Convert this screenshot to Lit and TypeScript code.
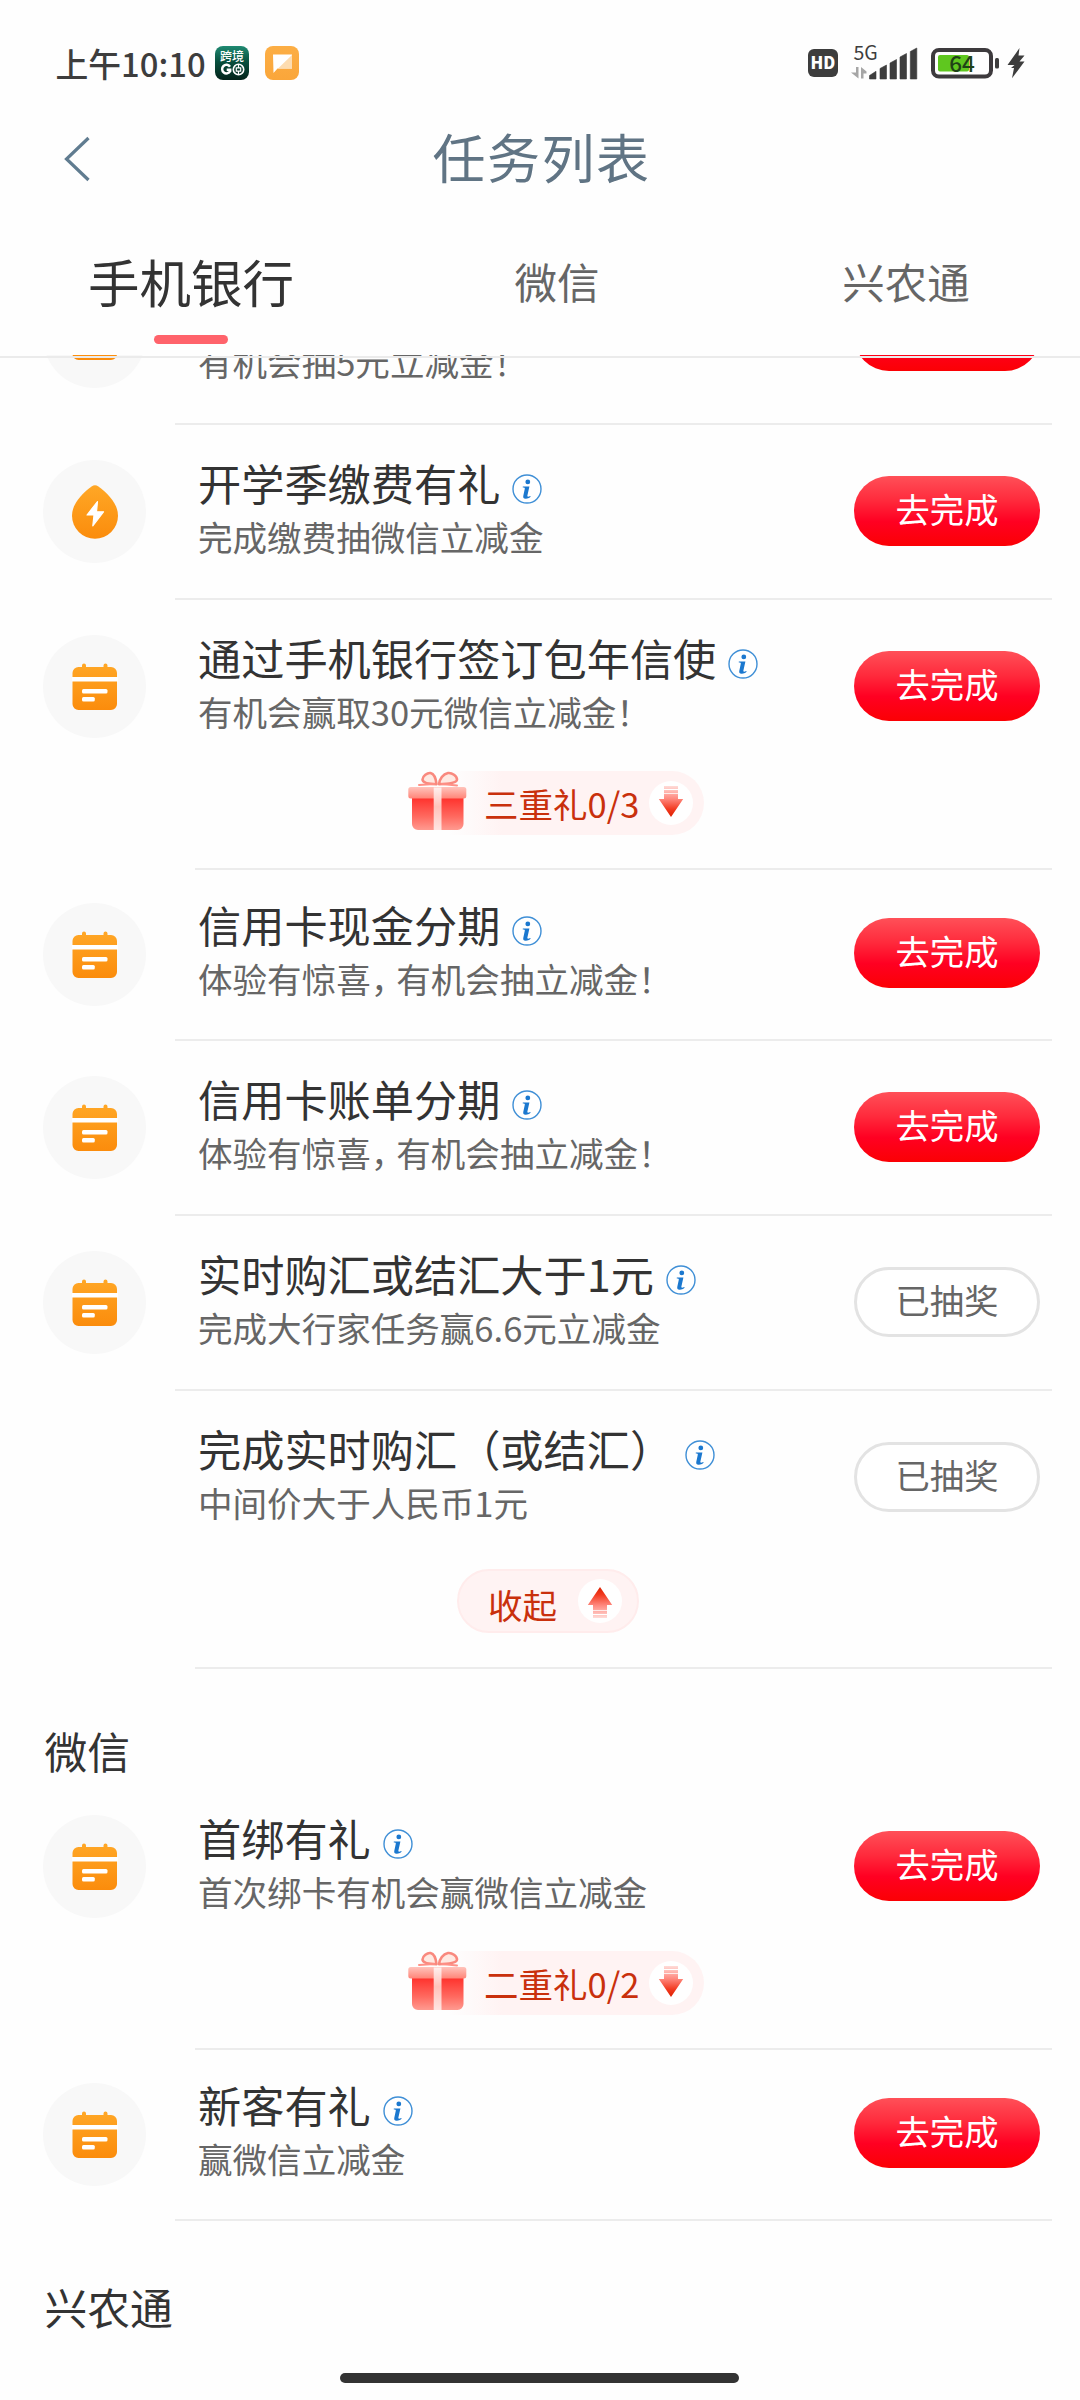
import { LitElement, html, css, svg, nothing } from "lit";
import { customElement, property } from "lit/decorators.js";

type TaskIcon = "calendar" | "drop" | "none";

interface Task {
  icon: TaskIcon;
  title: string;
  sub: string;
  done?: boolean;
  compact?: boolean;
  gift?: string;
  collapse?: boolean;
}

const BANK_TASKS: Task[] = [
  { icon: "calendar", title: "", sub: "有机会抽5元立减金！" },
  { icon: "drop", title: "开学季缴费有礼", sub: "完成缴费抽微信立减金" },
  { icon: "calendar", title: "通过手机银行签订包年信使", sub: "有机会赢取30元微信立减金！", gift: "三重礼0/3" },
  { icon: "calendar", title: "信用卡现金分期", sub: "体验有惊喜，有机会抽立减金！", compact: true },
  { icon: "calendar", title: "信用卡账单分期", sub: "体验有惊喜，有机会抽立减金！" },
  { icon: "calendar", title: "实时购汇或结汇大于1元", sub: "完成大行家任务赢6.6元立减金", done: true },
  { icon: "none", title: "完成实时购汇（或结汇）", sub: "中间价大于人民币1元", done: true, collapse: true },
];

const WECHAT_TASKS: Task[] = [
  { icon: "calendar", title: "首绑有礼", sub: "首次绑卡有机会赢微信立减金", gift: "二重礼0/2" },
  { icon: "calendar", title: "新客有礼", sub: "赢微信立减金", compact: true },
];

const orange = svg`<defs><linearGradient id="o" x1="0" y1="0" x2="0" y2="1">
  <stop offset="0" stop-color="#ffa726"/><stop offset="1" stop-color="#fb8c0c"/></linearGradient></defs>`;

const calendarIcon = html`<svg width="46" height="47" viewBox="0 0 46 47">
  ${orange}
  <path fill="url(#o)" d="M6.500 4H10V2.500a2 2 0 0 1 4 0V4h17.500V2.500a2 2 0 0 1 4 0V4H39a6 6 0 0 1 6 6v31a6 6 0 0 1-6 6H6.500a6 6 0 0 1-6-6V10a6 6 0 0 1 6-6z"/>
  <rect x="0" y="14" width="46" height="4.500" fill="#fff"/>
  <rect x="10" y="26" width="25.500" height="4.500" rx="1.500" fill="#fff"/>
  <rect x="10" y="34" width="12.800" height="4.600" rx="1.500" fill="#fff"/>
</svg>`;

const dropIcon = html`<svg class="drop" width="46" height="54" viewBox="0 0 46 54">
  ${orange}
  <path fill="url(#o)" d="M19.600 1.400Q23-1 26.400 1.400C36 8.500 46 18.500 46 30.800a23 23 0 0 1-46 0C0 18.500 10 8.500 19.600 1.400z"/>
  <path fill="#fff" stroke="#fff" stroke-width="1.200" stroke-linejoin="round" d="M25.500 16.500L15 30h7l-1.200 10.800L31.500 26.800h-7z"/>
</svg>`;

const infoIcon = html`<svg class="info" width="30" height="30" viewBox="0 0 30 30">
  <circle cx="15" cy="15" r="14" fill="#fff" stroke="#3f8fd6" stroke-width="1.400"/>
  <circle cx="15.800" cy="7.900" r="2.400" fill="#1b78cf"/>
  <path d="M10.800 12.500h6.600l-2 9.100c-.3 1.300.6 1.500 2.900.4l.3.800c-1.800 1.500-3.400 2-5 1.900-2-.1-2.700-1.200-2.300-3l1.500-7c.1-.8-.2-1.100-2-1.200z" fill="#1b78cf"/>
</svg>`;

const giftIcon = html`<svg class="gift" width="60" height="60" viewBox="0 0 60 60">
  <defs>
    <linearGradient id="gb" x1="0" y1="0" x2="0" y2="1">
      <stop offset="0" stop-color="#ff2f2a"/><stop offset=".6" stop-color="#ff6a60"/><stop offset="1" stop-color="#ff9a90"/></linearGradient>
    <linearGradient id="gl" x1="0" y1="0" x2="0" y2="1">
      <stop offset="0" stop-color="#ffc4bc"/><stop offset="1" stop-color="#ff8578"/></linearGradient>
    <linearGradient id="gr" x1="0" y1="0" x2="0" y2="1">
      <stop offset="0" stop-color="#fff0ee"/><stop offset=".45" stop-color="#ffc3bb"/><stop offset="1" stop-color="#ffe6e2"/></linearGradient>
  </defs>
  <path d="M5 26h51.500v27a6 6 0 0 1-6 6H11a6 6 0 0 1-6-6z" fill="url(#gb)"/>
  <rect x="1.300" y="16" width="58" height="11.500" rx="2.500" fill="url(#gl)"/>
  <rect x="26.700" y="16.500" width="7.800" height="42.500" fill="url(#gr)"/>
  <g fill="#ffe9e2" stroke="#f9897e" stroke-width="2.600" stroke-linejoin="round">
    <path d="M29.500 13.200C22 13 15.500 12 15.500 8.500c0-3.500 5-7 8-6.500 4 1 5.500 6 6 11.200z"/>
    <path d="M32 13.200c7.500-.2 18-1.200 18-4.700 0-3.500-5-7-9-6.500-5 1-8.500 6-9 11.200z"/>
  </g>
  <path d="M12 14l15-1M50 14.500l-15-1.500" stroke="#ff9187" stroke-width="2" stroke-linecap="round" fill="none"/>
</svg>`;

const arrowIcon = (up: boolean) => html`<svg class=${up ? "arrow up" : "arrow"} width="44" height="44" viewBox="0 0 44 44">
  <defs><linearGradient id="a" gradientUnits="userSpaceOnUse" x1="0" y1="5" x2="0" y2="36">
    <stop offset="0" stop-color="#ffdcd8"/><stop offset=".4" stop-color="#ff8a80"/><stop offset=".75" stop-color="#f23a20"/><stop offset="1" stop-color="#dc2000"/></linearGradient></defs>
  <circle cx="22" cy="22" r="22" fill="#fff"/>
  <path fill="url(#a)" d="M15 5h14v3H15zM15 9h14v3H15zM15 12.800h14v5.200h5.200L22 36 9.800 18H15z"/>
</svg>`;

@customElement("status-bar")
class StatusBar extends LitElement {
  static styles = css`
    :host { display: block; height: 110px; }
    .bar { display: flex; align-items: center; height: 36px; padding: 45px 55px 0 55.500px; color: #3d3d3d; }
    .time { font-size: 32.800px; line-height: 48px; font-weight: 500; margin: -4px 0; white-space: nowrap; width: 159.500px; }
    .apps { display: flex; gap: 16px; }
    .right { display: flex; margin-left: auto; align-items: center; }
    svg { display: block; }
  `;
  render() {
    return html`<div class="bar">
      <div class="time">上午10:10</div>
      <div class="apps">
        <svg width="34" height="34" viewBox="0 0 34 34">
          <defs><linearGradient id="g" x1="0" y1="0" x2="0" y2="1">
            <stop offset="0" stop-color="#1f8a72"/><stop offset=".45" stop-color="#08513f"/><stop offset="1" stop-color="#04231a"/></linearGradient></defs>
          <rect width="34" height="34" rx="8" fill="url(#g)"/>
          <text x="17" y="14.500" text-anchor="middle" font-size="12" font-weight="500" fill="#fff">跨境</text>
          <path d="M15 20.700a4.300 4.300 0 1 0 .2 4.500V23.800h-3.500" fill="none" stroke="#fff" stroke-width="2.500"/>
          <circle cx="23.500" cy="23.500" r="5.200" fill="none" stroke="#fff" stroke-width="1.600"/>
          <path d="M21.300 21.800h4.400v3.400h-4.400zM23.500 19v2.800M23.500 25.200v3" fill="none" stroke="#fff" stroke-width="1.200"/>
        </svg>
        <svg width="34" height="34" viewBox="0 0 34 34">
          <defs><linearGradient id="y" x1="0" y1="0" x2="0" y2="1">
            <stop offset="0" stop-color="#fcae45"/><stop offset="1" stop-color="#faa63a"/></linearGradient></defs>
          <rect width="34" height="34" rx="8" fill="url(#y)"/>
          <path d="M8 8.500h19v14H12.500L8.500 27z" fill="#fff"/>
          <path d="M27 9v13.500H13z" fill="#fddcb0"/>
        </svg>
      </div>
      <div class="right">
        <svg width="218" height="36" viewBox="807 45 218 36" fill="#3d3d3d">
          <rect x="808" y="49" width="30" height="28" rx="6"/>
          <text x="823" y="69" text-anchor="middle" font-size="16.500" font-weight="900" fill="#fff">HD</text>
          <text x="853.500" y="59.500" font-size="19.500">5G</text>
          <g fill="#a6a6a6"><path d="M856 67h2.500v11.500L851 72.500h5z"/><path d="M863.500 78.500H861V67l5.500 4.500v2h-3z"/></g>
          <path d="M869.500 79v-3.500l6.500-4.200V79zM880 79V68.500l6.500-3.500v14zM890 79V63l6.500-3.500V79zM900 79V57l6.500-3.500V79zM910.300 79V51.500l6.500-3.500v31z" stroke="#3d3d3d" stroke-width=".6" stroke-linejoin="round"/>
          <rect x="933" y="50" width="58" height="26.500" rx="6" fill="none" stroke="#3d3a3d" stroke-width="4"/>
          <rect x="938" y="55" width="31" height="16.500" rx="2" fill="#5fc71f"/>
          <text x="962" y="71.500" text-anchor="middle" font-size="22.500" font-weight="500" fill="#1f4216">64</text>
          <rect x="995" y="58" width="4" height="10.500" rx="1.500"/>
          <path d="M1019.500 48l-12 17h7l-3.500 3h3l-2 10.300 12.500-16.800h-5l5-6h-6z"/>
        </svg>
      </div>
    </div>`;
  }
}

@customElement("nav-header")
class NavHeader extends LitElement {
  static styles = css`
    :host { display: block; }
    .title-bar { display: grid; grid-template-columns: 140px 1fr 140px; align-items: center; height: 98px; }
    .back { margin-left: 64px; display: block; }
    .title { text-align: center; font-size: 53px; letter-spacing: 1.500px; line-height: 80px; color: #607484; margin: -6px 0 0 3px; }
    .tabs { display: grid; grid-template-columns: 382px 350px 348px; height: 147px; }
    .tab { display: flex; flex-direction: column; align-items: center; font-size: 42.500px; color: #666; }
    .label { height: 127px; line-height: 145px; white-space: nowrap; }
    .tab.on { font-size: 51.500px; color: #333; }
    .mark { width: 74px; height: 9px; border-radius: 4.500px; background: #ff636b; }
  `;
  render() {
    return html`
      <div class="title-bar">
        <svg class="back" width="28" height="46" viewBox="0 0 28 46">
          <path d="M24.500 2L2.500 23l22 21" fill="none" stroke="#607c90" stroke-width="3.200"/>
        </svg>
        <div class="title">任务列表</div>
      </div>
      <div class="tabs">
        <div class="tab on"><div class="label">手机银行</div><div class="mark"></div></div>
        <div class="tab"><div class="label">微信</div></div>
        <div class="tab"><div class="label">兴农通</div></div>
      </div>`;
  }
}

@customElement("task-row")
class TaskRow extends LitElement {
  @property({ attribute: false }) task!: Task;

  static styles = css`
    :host { display: block; }
    svg { display: block; flex: none; }
    .main { display: flex; align-items: center; height: 172px; padding: 0 40px 0 43px; }
    .compact .main { height: 166px; }
    .disc { flex: none; width: 103px; height: 103px; border-radius: 50%; background: #f8f8f8; display: flex; align-items: center; justify-content: center; }
    .compact .disc { margin-top: 2px; }
    .disc.empty { background: none; }
    .drop { margin-top: 2px; }
    .texts { flex: 1; margin: -5px 0 0 52px; white-space: nowrap; }
    .title { display: flex; align-items: center; gap: 12px; font-size: 43.200px; line-height: 54px; height: 54px; color: #333; }
    .info { margin-top: 15px; }
    .sub { font-size: 34.560px; line-height: 54px; color: #666; }
    .comma { margin-right: -9px; }
    .btn { flex: none; box-sizing: border-box; width: 186px; height: 70px; border-radius: 35px; display: flex; justify-content: center; font-size: 34.300px; line-height: 65px; color: #fff; background: linear-gradient(180deg, #ff5058 0%, #ff2a3c 35%, #ff0022 65%, #fb0004 100%); }
    .btn.done { color: #666; background: #fff; border: 3px solid #e3e3e3; line-height: 59px; }
    .rule { height: 2px; margin: 1px 28px 0 175px; background: #ececec; }
    .compact .rule { margin-top: 3px; }
    .grouped .rule { margin: 33px 28px 0 195px; }
    .folded .rule { margin-top: 34px; }
    .pill { box-sizing: border-box; display: flex; align-items: center; height: 64px; border-radius: 32px; color: #c9300c; font-size: 34.500px; width: 297px; margin: -1px 0 0 407px; padding-right: 11px; background: linear-gradient(90deg, #fff3f300 14%, #fff3f3 32%); }
    .pill span { line-height: 61px; }
    .gift { margin: -5px 17px 0 0; }
    .arrow { margin-left: auto; }
    .up { transform: rotate(180deg); }
    .folded .pill { width: 182px; margin: 6px 0 0 457px; padding: 0 15px 0 29px; background: #fff3f3; border: 2px solid #ffecec; }
    .folded .pill span { line-height: 60px; padding-top: 5px; }
    .folded .arrow { margin-top: -1px; }
  `;

  private subText(text: string) {
    const [head, tail] = text.split("，");
    return tail ? html`${head}<span class="comma">，</span>${tail}` : text;
  }

  render() {
    const t = this.task;
    const grouped = t.gift || t.collapse;
    const cls = [t.compact ? "compact" : "", grouped ? "grouped" : "", t.collapse ? "folded" : ""].join(" ");
    return html`<div class=${cls}>
      <div class="main">
        <div class="disc ${t.icon === "none" ? "empty" : ""}">
          ${t.icon === "calendar" ? calendarIcon : t.icon === "drop" ? dropIcon : nothing}
        </div>
        <div class="texts">
          <div class="title">${t.title ? html`<span>${t.title}</span>${infoIcon}` : nothing}</div>
          <div class="sub">${this.subText(t.sub)}</div>
        </div>
        <div class="btn ${t.done ? "done" : ""}">${t.done ? "已抽奖" : "去完成"}</div>
      </div>
      ${t.gift ? html`<div class="pill">${giftIcon}<span>${t.gift}</span>${arrowIcon(false)}</div>` : nothing}
      ${t.collapse ? html`<div class="pill"><span>收起</span>${arrowIcon(true)}</div>` : nothing}
      <div class="rule"></div>
    </div>`;
  }
}

@customElement("app-root")
class AppRoot extends LitElement {
  static styles = css`
    :host { display: block; width: 1080px; height: 2400px; overflow: hidden; background: #fefefe; position: relative;
      font-family: "Noto Sans CJK SC", "Noto Sans", sans-serif; }
    .page { display: flex; flex-direction: column; height: 2400px; }
    .top { height: 355px; flex: none; }
    .list { flex: 1; min-height: 0; overflow: hidden; }
    .scroll { margin-top: -105px; }
    .edge { position: absolute; left: 0; right: 0; top: 356px; height: 2px; background: #ebebeb; }
    .section { font-size: 42.800px; color: #333; padding-left: 44.500px; height: 111px; line-height: 162px; }
    .section.last { line-height: 170px; }
    .home { position: absolute; left: 340px; top: 2373px; width: 399px; height: 10px; border-radius: 5px; background: #333; }
  `;
  render() {
    return html`<div class="page">
      <div class="top"><status-bar></status-bar><nav-header></nav-header></div>
      <div class="list"><div class="scroll">
        ${BANK_TASKS.map((t) => html`<task-row .task=${t}></task-row>`)}
        <div class="section">微信</div>
        ${WECHAT_TASKS.map((t) => html`<task-row .task=${t}></task-row>`)}
        <div class="section last">兴农通</div>
      </div></div>
      <div class="edge"></div>
      <div class="home"></div>
    </div>`;
  }
}
